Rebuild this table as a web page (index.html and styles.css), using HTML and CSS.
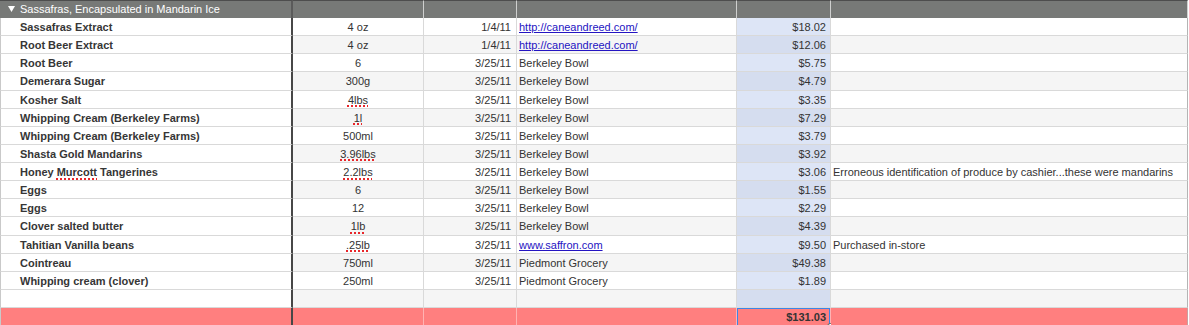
FILE: index.html
```html
<!DOCTYPE html>
<html>
<head>
<meta charset="utf-8">
<link rel="stylesheet" href="styles.css">
</head>
<body>
<div class="sheet">
  <div class="row head">
    <div class="c c1"><svg class="tri" width="7" height="6" viewBox="0 0 7 6"><path d="M0 0H7L3.5 6Z" fill="#fff"/></svg>Sassafras, Encapsulated in Mandarin Ice</div>
    <div class="c"></div><div class="c"></div><div class="c"></div><div class="c"></div><div class="c last"></div>
  </div>
  <div class="row odd">
    <div class="c c1">Sassafras Extract</div><div class="c qty">4 oz</div><div class="c date">1/4/11</div><div class="c src"><a href="#">http://caneandreed.com/</a></div><div class="c price">$18.02</div><div class="c note last"></div>
  </div>
  <div class="row even">
    <div class="c c1">Root Beer Extract</div><div class="c qty">4 oz</div><div class="c date">1/4/11</div><div class="c src"><a href="#">http://caneandreed.com/</a></div><div class="c price">$12.06</div><div class="c note last"></div>
  </div>
  <div class="row odd">
    <div class="c c1">Root Beer</div><div class="c qty">6</div><div class="c date">3/25/11</div><div class="c src">Berkeley Bowl</div><div class="c price">$5.75</div><div class="c note last"></div>
  </div>
  <div class="row even">
    <div class="c c1">Demerara Sugar</div><div class="c qty">300g</div><div class="c date">3/25/11</div><div class="c src">Berkeley Bowl</div><div class="c price">$4.79</div><div class="c note last"></div>
  </div>
  <div class="row odd">
    <div class="c c1">Kosher Salt</div><div class="c qty"><span class="sp">4lbs</span></div><div class="c date">3/25/11</div><div class="c src">Berkeley Bowl</div><div class="c price">$3.35</div><div class="c note last"></div>
  </div>
  <div class="row even">
    <div class="c c1">Whipping Cream (Berkeley Farms)</div><div class="c qty"><span class="sp">1l</span></div><div class="c date">3/25/11</div><div class="c src">Berkeley Bowl</div><div class="c price">$7.29</div><div class="c note last"></div>
  </div>
  <div class="row odd">
    <div class="c c1">Whipping Cream (Berkeley Farms)</div><div class="c qty">500ml</div><div class="c date">3/25/11</div><div class="c src">Berkeley Bowl</div><div class="c price">$3.79</div><div class="c note last"></div>
  </div>
  <div class="row even">
    <div class="c c1">Shasta Gold Mandarins</div><div class="c qty"><span class="sp">3.96lbs</span></div><div class="c date">3/25/11</div><div class="c src">Berkeley Bowl</div><div class="c price">$3.92</div><div class="c note last"></div>
  </div>
  <div class="row odd">
    <div class="c c1">Honey <span class="sp">Murcott</span> Tangerines</div><div class="c qty"><span class="sp">2.2lbs</span></div><div class="c date">3/25/11</div><div class="c src">Berkeley Bowl</div><div class="c price">$3.06</div><div class="c note last">Erroneous identification of produce by cashier...these were mandarins</div>
  </div>
  <div class="row even">
    <div class="c c1">Eggs</div><div class="c qty">6</div><div class="c date">3/25/11</div><div class="c src">Berkeley Bowl</div><div class="c price">$1.55</div><div class="c note last"></div>
  </div>
  <div class="row odd">
    <div class="c c1">Eggs</div><div class="c qty">12</div><div class="c date">3/25/11</div><div class="c src">Berkeley Bowl</div><div class="c price">$2.29</div><div class="c note last"></div>
  </div>
  <div class="row even">
    <div class="c c1">Clover salted butter</div><div class="c qty"><span class="sp">1lb</span></div><div class="c date">3/25/11</div><div class="c src">Berkeley Bowl</div><div class="c price">$4.39</div><div class="c note last"></div>
  </div>
  <div class="row odd">
    <div class="c c1">Tahitian Vanilla beans</div><div class="c qty"><span class="sp">.25lb</span></div><div class="c date">3/25/11</div><div class="c src"><a href="#">www.saffron.com</a></div><div class="c price">$9.50</div><div class="c note last">Purchased in-store</div>
  </div>
  <div class="row even">
    <div class="c c1">Cointreau</div><div class="c qty">750ml</div><div class="c date">3/25/11</div><div class="c src">Piedmont Grocery</div><div class="c price">$49.38</div><div class="c note last"></div>
  </div>
  <div class="row odd">
    <div class="c c1">Whipping cream (clover)</div><div class="c qty">250ml</div><div class="c date">3/25/11</div><div class="c src">Piedmont Grocery</div><div class="c price">$1.89</div><div class="c note last"></div>
  </div>
  <div class="row even">
    <div class="c c1"></div><div class="c qty"></div><div class="c date"></div><div class="c src"></div><div class="c price"></div><div class="c note last"></div>
  </div>
  <div class="row total">
    <div class="c c1"></div><div class="c qty"></div><div class="c date"></div><div class="c src"></div><div class="c price sel">$131.03<span class="handle"></span></div><div class="c note last"></div>
  </div>
</div>
</body>
</html>
```

FILE: styles.css
```css
html, body {
  margin: 0;
  padding: 0;
  background: #ffffff;
}

body {
  font-family: "Liberation Sans", Arial, Helvetica, sans-serif;
  font-size: 11px;
  color: #333333;
}

.sheet {
  width: 1188px;
}

.row {
  display: grid;
  grid-template-columns: 293px 131px 93px 220px 94px 357px;
  height: 18.125px;
}

.c {
  box-sizing: border-box;
  display: block;
  height: 18.125px;
  line-height: 16px;
  padding: 1px 4px 0 4px;
  border-right: 1px solid #d9d9d9;
  border-bottom: 1px solid #d9d9d9;
  white-space: nowrap;
  overflow: visible;
  min-width: 0;
  position: relative;
}

.c1 {
  border-left: 1px solid #c9c9c9;
  border-right: 2px solid #474747;
  padding-left: 19px;
  font-weight: bold;
  color: #363636;
  background: #ffffff;
}

.c.last {
  border-right-color: #b4b4b4;
}

.qty {
  text-align: center;
}

.date {
  text-align: right;
  padding-right: 5px;
}

.src {
  padding-left: 2px;
}

.price {
  text-align: right;
  padding-right: 4px;
  background: #dde5f6;
}

.note {
  padding-left: 2px;
}

a {
  color: #2414c2;
  text-decoration: underline;
}

.sp {
  text-decoration: underline dotted #e8262a;
  text-decoration-thickness: 2px;
  text-underline-offset: 2px;
}

/* alternating rows */
.even .c {
  background: #f5f5f5;
}

.even .c1 {
  background: #ffffff;
}

.even .price {
  background: #d5ddef;
}

/* header */
.head {
  height: 18px;
}

.head .c {
  height: 18px;
  background: #777977;
  border-top: 1px solid #4d4d4d;
  border-bottom: none;
  border-right-color: #cfd0cf;
  color: #ffffff;
  font-weight: normal;
  padding-top: 0;
  padding-left: 8px;
  line-height: 17px;
}

.head .c1 {
  border-left: none;
  border-right: 2px solid #5a5a5a;
}

.tri {
  margin-right: 5px;
  vertical-align: 1px;
}

/* total row */
.total .c {
  background: #ff7f7f;
  border-bottom: none;
  border-right-color: #ffb3b3;
  line-height: 17px;
}

.total .c1 {
  border-right-color: #474747;
}

.total .c.last {
  border-right-color: #c8a0a0;
}

.total .price {
  font-weight: bold;
}

.sel {
  box-shadow: inset 0 0 0 1px #3c84e6;
}

.handle {
  position: absolute;
  right: -4px;
  bottom: -4px;
  width: 5px;
  height: 5px;
  border-radius: 50%;
  background: #ffffff;
  border: 1px solid #555555;
}
```
